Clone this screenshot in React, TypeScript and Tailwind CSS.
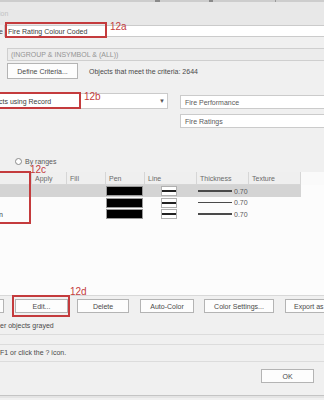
import React from "react";

const Btn = ({ w, label, extra = "" }: { w: string; label: string; extra?: string }) => (
  <div className={`${w} h-[14px] shrink-0 bg-[#fdfdfd] border border-[#b4b4b4] flex items-center justify-center text-[#4a4a4a] ${extra}`}>{label}</div>
);

const rows = [
  { sel: true, h: "h-[12px]", name: "" },
  { sel: false, h: "h-[11px]", name: "" },
  { sel: false, h: "h-[12px]", name: "n" },
];

export default function App() {
  return (
    <div className="relative w-[324px] h-[400px] overflow-hidden bg-[#f0f0f0] text-[7px] leading-none text-[#4a4a4a] font-['Liberation_Sans',Arial,sans-serif]">
      {/* top strip */}
      <div className="flex h-[2px]">
        <div className="w-[155px] bg-[#cdcdcd]" />
        <div className="w-[5px] bg-[#8a8a8a]" />
        <div className="w-[49px] bg-[#cdcdcd]" />
        <div className="w-[4px] bg-[#8a8a8a]" />
        <div className="w-[62px] bg-[#cdcdcd]" />
        <div className="w-[1px] bg-[#9a9a9a]" />
        <div className="flex-1 bg-[#cdcdcd]" />
      </div>
      {/* band */}
      <div className="h-[23px] bg-[#e8e8e8] flex items-center text-[#c2c2c2]">
        <span className="-ml-[1px]">ion</span>
      </div>
      {/* row 1 */}
      <div className="flex h-[12px] items-center">
        <span className="w-[5px] -ml-[1px]">e</span>
        <div className="flex-1 h-[12px] bg-white border-y border-l border-[#cbcbcb] flex items-center pl-[3px] text-[#404040]">
          Fire Rating Colour Coded
        </div>
      </div>
      {/* row 2 */}
      <div className="mt-[11px] ml-[7px] h-[13px] border-y border-l border-[#cfcfcf] bg-[#ececec] flex items-center pl-[3px] text-[#949494]">
        (INGROUP &amp; INSYMBOL &amp; (ALL))
      </div>
      {/* row 3 */}
      <div className="mt-[2px] flex items-center h-[16px]">
        <Btn w="w-[71px] ml-[7px] !h-[16px]" label="Define Criteria..." />
        <span className="ml-[11px]">Objects that meet the criteria: 2644</span>
      </div>
      {/* row 4 */}
      <div className="mt-[14px] flex items-start">
        <div className="w-[168px] h-[16px] bg-white border-y border-r border-[#cbcbcb] flex items-center justify-between pr-[2px] text-[#404040]">
          <span className="-ml-[1px]">cts using Record</span>
          <span className="text-[6px] text-[#555]">▼</span>
        </div>
        <div className="ml-[12px] flex-1 flex flex-col">
          <div className="mt-[2px] h-[14px] bg-white border-y border-l border-[#cbcbcb] flex items-center pl-[4px] text-[#5a5a5a]">Fire Performance</div>
          <div className="mt-[5px] h-[14px] bg-white border-y border-l border-[#cbcbcb] flex items-center pl-[4px] text-[#5a5a5a]">Fire Ratings</div>
        </div>
      </div>
      {/* radio */}
      <div className="mt-[28px] h-[10px] flex items-center">
        <div className="ml-[15px] w-[7px] h-[7px] rounded-full border border-[#8a8a8a] bg-white" />
        <span className="ml-[3px] text-[#5a5a5a]">By ranges</span>
      </div>
      {/* table */}
      <div className="mt-[6px] h-[123px] bg-[#fcfcfc]">
        <div className="flex h-[13px] bg-[#fafafa]">
          {[
            ["w-[32px]", ""],
            ["w-[35px]", "Apply"],
            ["w-[39px]", "Fill"],
            ["w-[39px]", "Pen"],
            ["w-[52px]", "Line"],
            ["w-[52px]", "Thickness"],
            ["w-[52px]", "Texture"],
          ].map(([w, t], i) => (
            <div key={i} className={`${w} h-full bg-[#efefef] border-r border-b border-[#d6d6d6] flex items-center pl-[3px] text-[#6a6a6a]`}>{t}</div>
          ))}
        </div>
        {rows.map((r, i) => (
          <div key={i} className={`flex ${r.h}`}>
            <div className={`flex w-[301px] items-center ${r.sel ? "bg-[#d4d4d4]" : ""}`}>
              <div className="w-[106px] -ml-[1px] text-[#404040]">{r.name}</div>
              <div className="w-[39px] pl-[1px] h-full flex items-center">
                <div className="w-[37px] h-[10px] bg-black border border-[#9a9a9a]" />
              </div>
              <div className="w-[52px] h-full flex items-center pl-[17px]">
                <div className="w-[16px] h-[10px] bg-white border border-[#b0b0b0] flex items-center">
                  <div className="w-full h-[2px] bg-[#222]" />
                </div>
              </div>
              <div className="w-[52px] h-full flex items-center pl-[2px]">
                <div className="w-[34px] h-[1.5px] bg-[#4a4a4a]" />
                <span className="ml-[2px] text-[#5a5a5a]">0.70</span>
              </div>
            </div>
          </div>
        ))}
      </div>
      {/* bottom */}
      <div className="border-t border-[#d8d8d8]">
        <div className="mt-[3px] flex">
          <Btn w="w-[5px] -ml-[1px]" label="" />
          <Btn w="w-[53px] ml-[11px]" label="Edit..." />
          <Btn w="w-[52px] ml-[9px]" label="Delete" />
          <Btn w="w-[54px] ml-[11px]" label="Auto-Color" />
          <Btn w="w-[70px] ml-[10px]" label="Color Settings..." />
          <Btn w="w-[60px] ml-[11px] !justify-start pl-[8px]" label="Export as" />
        </div>
        <div className="mt-[8px] h-[8px] flex items-center">er objects grayed</div>
        <div className="mt-[5px] h-[11px] border-y border-[#dcdcdc]" />
        <div className="mt-[3px] h-[8px] flex items-center">F1 or click the ? icon.</div>
        <div className="mt-[5px] border-t border-[#dcdcdc]" />
        <div className="mt-[7px] flex">
          <Btn w="w-[53px] ml-[261px]" label="OK" />
        </div>
        <div className="mt-[12px] h-[3px] border-t border-[#c4c4c4] bg-[#e4e4e4]" />
      </div>

      {/* annotations */}
      <div className="absolute left-[5px] top-[22px] w-[102px] h-[16px] border-2 border-[#c43b3d]" />
      <div className="absolute left-[110px] top-[21.5px] text-[10px] leading-[10px] text-[#c43b3d]">12a</div>
      <div className="absolute left-[-3px] top-[92px] w-[84px] h-[17px] border-2 border-[#c43b3d]" />
      <div className="absolute left-[84px] top-[91.5px] text-[10px] leading-[10px] text-[#c43b3d]">12b</div>
      <div className="absolute left-[-3px] top-[171px] w-[34px] h-[53px] border-2 border-[#c43b3d]" />
      <div className="absolute left-[30px] top-[164.5px] text-[10px] leading-[10px] text-[#c43b3d]">12c</div>
      <div className="absolute left-[12px] top-[295px] w-[58px] h-[22px] border-2 border-[#c43b3d]" />
      <div className="absolute left-[70px] top-[286.5px] text-[10px] leading-[10px] text-[#c43b3d]">12d</div>
    </div>
  );
}
